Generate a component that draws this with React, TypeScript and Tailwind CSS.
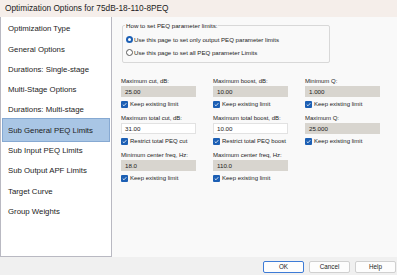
import React from "react";

const navItems = [
  "Optimization Type",
  "General Options",
  "Durations: Single-stage",
  "Multi-Stage Options",
  "Durations: Multi-stage",
  "Sub General PEQ Limits",
  "Sub Input PEQ Limits",
  "Sub Output APF Limits",
  "Target Curve",
  "Group Weights",
];

const fields = [
  [
    { label: "Maximum cut, dB:", value: "25.00", check: "Keep existing limit", enabled: false },
    { label: "Maximum boost, dB:", value: "10.00", check: "Keep existing limit", enabled: false },
    { label: "Minimum Q:", value: "1.000", check: "Keep existing limit", enabled: false },
  ],
  [
    { label: "Maximum total cut, dB:", value: "31.00", check: "Restrict total PEQ cut", enabled: true },
    { label: "Maximum total boost, dB:", value: "10.00", check: "Restrict total PEQ boost", enabled: true },
    { label: "Maximum Q:", value: "25.000", check: "Keep existing limit", enabled: false },
  ],
  [
    { label: "Minimum center freq, Hz:", value: "18.0", check: "Keep existing limit", enabled: false },
    { label: "Maximum center freq, Hz:", value: "110.0", check: "Keep existing limit", enabled: false },
    null,
  ],
];

function Check() {
  return (
    <span className="w-[7px] h-[7px] bg-[#1c5fb4] rounded-[1px] flex items-center justify-center shrink-0">
      <svg width="5" height="5" viewBox="0 0 10 10">
        <path d="M1.5 5.2 L4 7.6 L8.6 2.4" fill="none" stroke="white" strokeWidth="1.6" />
      </svg>
    </span>
  );
}

function Radio({ on }: { on: boolean }) {
  return on ? (
    <span className="w-[7px] h-[7px] rounded-full bg-[#1c5fb4] flex items-center justify-center shrink-0">
      <span className="w-[3px] h-[3px] rounded-full bg-white" />
    </span>
  ) : (
    <span className="w-[7px] h-[7px] rounded-full border border-[#5a5a5a] bg-white shrink-0" />
  );
}

export default function App() {
  return (
    <div
      className="w-[397px] h-[275px] flex flex-col overflow-hidden text-[#1b1b1b] bg-[#f9f9f9]"
      style={{ fontFamily: '"Liberation Sans", Arial, sans-serif' }}
    >
      <div className="h-[17px] bg-[#f5eeea] flex items-center pl-[5px] text-[8.3px]">
        Optimization Options for 75dB-18-110-8PEQ
      </div>

      <div className="flex-1 flex min-h-0">
        <div className="w-[112px] bg-white border-l border-r border-b border-[#b9b9c2] pt-[2px] pl-[1px] pr-[1px] flex flex-col">
          {navItems.map((item, i) => (
            <div key={item} className="relative h-[20.3px] flex items-center pl-[6px] text-[7.8px]">
              {i === 5 && (
                <div className="absolute left-0 right-0 -top-[2px] -bottom-[1px] bg-[#a9c6e5] border border-[#86a9d2]" />
              )}
              <span className="relative">{item}</span>
            </div>
          ))}
        </div>

        <div className="flex-1 pl-[9px] pt-[8px]">
          <div className="relative ml-[1px] w-[208px] h-[38px] border border-[#d8d8d8] rounded-[2px] pt-[7px] pl-[3px]">
            <div className="absolute left-[2px] -top-[4px] px-[1px] bg-[#f9f9f9] text-[6.2px] leading-[8px]">
              How to set PEQ parameter limits:
            </div>
            <div className="flex items-center gap-[1px] h-[13px] text-[6.1px]">
              <Radio on />
              <span>Use this page to set only output PEQ parameter limits</span>
            </div>
            <div className="flex items-center gap-[1px] h-[13px] text-[6.1px]">
              <Radio on={false} />
              <span>Use this page to set all PEQ parameter Limits</span>
            </div>
          </div>

          <div className="mt-[14px] flex flex-col gap-[6px]">
            {fields.map((row, r) => (
              <div key={r} className="flex gap-[17px]">
                {row.map((f, c) =>
                  f ? (
                    <div key={c} className="w-[75px] flex flex-col">
                      <div className="h-[8px] flex items-center text-[6px]">{f.label}</div>
                      <div
                        className={
                          "mt-[1px] h-[11px] flex items-center pl-[3px] text-[6.2px] border " +
                          (f.enabled
                            ? "bg-white border-[#e2e2e2]"
                            : "bg-[#d8d5cf] border-[#d8d5cf]")
                        }
                      >
                        {f.value}
                      </div>
                      <div className="mt-[3px] h-[8px] flex items-center gap-[2px] text-[6px]">
                        <Check />
                        <span>{f.check}</span>
                      </div>
                    </div>
                  ) : (
                    <div key={c} className="w-[75px]" />
                  )
                )}
              </div>
            ))}
          </div>
        </div>
      </div>

      <div className="h-[18px] bg-[#f0f0f0] flex justify-end items-start pt-[4px] pr-[1px] gap-[5px] text-[6.3px]">
        <button className="w-[41px] h-[12px] bg-[#fdfdfd] border border-[#3d7bd6] rounded-[2px] flex items-center justify-center">
          OK
        </button>
        <button className="w-[41px] h-[12px] bg-[#fdfdfd] border border-[#d0d0d0] rounded-[2px] flex items-center justify-center">
          Cancel
        </button>
        <button className="w-[41px] h-[12px] bg-[#fdfdfd] border border-[#d0d0d0] rounded-[2px] flex items-center justify-center">
          Help
        </button>
      </div>
    </div>
  );
}
